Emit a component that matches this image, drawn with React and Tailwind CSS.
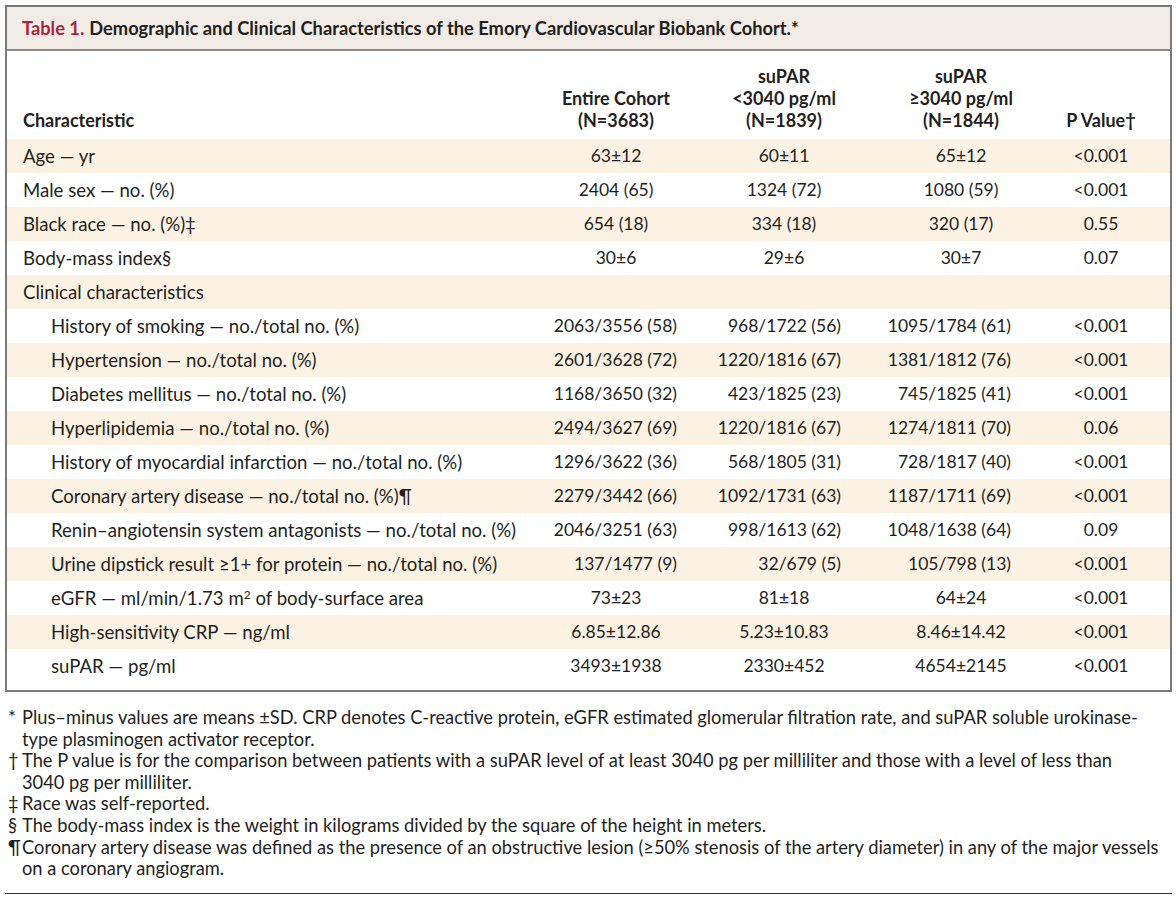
import React from "react";

const rows = [
  { label: "Age — yr", v: ["63±12", "60±11", "65±12", "<0.001"] },
  { label: "Male sex — no. (%)", v: ["2404 (65)", "1324 (72)", "1080 (59)", "<0.001"] },
  { label: "Black race — no. (%)‡", v: ["654 (18)", "334 (18)", "320 (17)", "0.55"] },
  { label: "Body-mass index§", v: ["30±6", "29±6", "30±7", "0.07"] },
  { label: "Clinical characteristics", v: ["", "", "", ""] },
  { label: "History of smoking — no./total no. (%)", sub: true, slash: true, v: ["2063/3556 (58)", "968/1722 (56)", "1095/1784 (61)", "<0.001"] },
  { label: "Hypertension — no./total no. (%)", sub: true, slash: true, v: ["2601/3628 (72)", "1220/1816 (67)", "1381/1812 (76)", "<0.001"] },
  { label: "Diabetes mellitus — no./total no. (%)", sub: true, slash: true, v: ["1168/3650 (32)", "423/1825 (23)", "745/1825 (41)", "<0.001"] },
  { label: "Hyperlipidemia — no./total no. (%)", sub: true, slash: true, v: ["2494/3627 (69)", "1220/1816 (67)", "1274/1811 (70)", "0.06"] },
  { label: "History of myocardial infarction — no./total no. (%)", sub: true, slash: true, v: ["1296/3622 (36)", "568/1805 (31)", "728/1817 (40)", "<0.001"] },
  { label: "Coronary artery disease — no./total no. (%)¶", sub: true, slash: true, v: ["2279/3442 (66)", "1092/1731 (63)", "1187/1711 (69)", "<0.001"] },
  { label: "Renin–angiotensin system antagonists — no./total no. (%)", sub: true, slash: true, v: ["2046/3251 (63)", "998/1613 (62)", "1048/1638 (64)", "0.09"] },
  { label: "Urine dipstick result ≥1+ for protein — no./total no. (%)", sub: true, slash: true, v: ["137/1477 (9)", "32/679 (5)", "105/798 (13)", "<0.001"] },
  { label: "egfr", sub: true, v: ["73±23", "81±18", "64±24", "<0.001"] },
  { label: "High-sensitivity CRP — ng/ml", sub: true, v: ["6.85±12.86", "5.23±10.83", "8.46±14.42", "<0.001"] },
  { label: "suPAR — pg/ml", sub: true, v: ["3493±1938", "2330±452", "4654±2145", "<0.001"] },
];

const slashPad = ["pr-[14px]", "pr-[36px]", "pr-[34px]"];

const Row = ({ row, idx }) => {
  const bg = idx % 2 === 0 ? "bg-[#fcf2e3]" : "bg-white";
  return (
    <div className={`grid grid-cols-[534px_150px_186px_168px_112px_1fr] h-[34px] items-center text-[17.5px] ${bg}`}>
      <div className={`text-[18.6px] ${row.sub ? "pl-[44px]" : "pl-[16px]"}`}>
        {row.label === "egfr" ? (
          <span>
            eGFR — ml/min/1.73 m<sup className="text-[12px]">2</sup> of body-surface area
          </span>
        ) : (
          row.label
        )}
      </div>
      {row.v.map((val, i) => (
        <div
          key={i}
          className={row.slash && i < 3 ? `text-right ${slashPad[i]}` : "text-center"}
        >
          {val}
        </div>
      ))}
      <div />
    </div>
  );
};

const App = () => {
  return (
    <div className="bg-white w-[1176px] h-[900px] pt-[5px] pl-[5px] font-['Lato',sans-serif] text-[#231f20] text-[17px] leading-[22px]">
      <div className="w-[1167px] border-2 border-[#7a7a7a]">
        <div className="bg-[#f1ece6] h-[44px] flex items-center pl-[15px] border-b-2 border-[#8a8a8a] font-bold text-[18.3px]">
          <span className="text-[#a7263e]">Table 1.</span>
          <span className="ml-[5px]">
            Demographic and Clinical Characteristics of the Emory Cardiovascular Biobank Cohort.*
          </span>
        </div>
        <div className="grid grid-cols-[534px_150px_186px_168px_112px_1fr] h-[88px] items-end pb-[8px] font-bold text-[18px]">
          <div className="pl-[16px]">Characteristic</div>
          <div className="text-center">
            Entire Cohort
            <br />
            (N=3683)
          </div>
          <div className="text-center">
            suPAR
            <br />
            &lt;3040 pg/ml
            <br />
            (N=1839)
          </div>
          <div className="text-center">
            suPAR
            <br />
            ≥3040 pg/ml
            <br />
            (N=1844)
          </div>
          <div className="text-center">P Value†</div>
          <div />
        </div>
        {rows.map((row, idx) => (
          <Row row={row} idx={idx} key={idx} />
        ))}
        <div className="h-[7px]" />
      </div>
      <div className="mt-[15px] w-[1167px] text-[18.3px] leading-[21.6px]">
        <div className="flex">
          <span className="w-[17px] shrink-0 pl-[3px]">*</span>
          <span>
            Plus–minus values are means ±SD. CRP denotes C-reactive protein, eGFR estimated glomerular filtration rate, and suPAR soluble urokinase-
            <br />
            type plasminogen activator receptor.
          </span>
        </div>
        <div className="flex">
          <span className="w-[17px] shrink-0 pl-[3px]">†</span>
          <span>
            The P value is for the comparison between patients with a suPAR level of at least 3040 pg per milliliter and those with a level of less than
            <br />
            3040 pg per milliliter.
          </span>
        </div>
        <div className="flex">
          <span className="w-[17px] shrink-0 pl-[3px]">‡</span>
          <span>Race was self-reported.</span>
        </div>
        <div className="flex">
          <span className="w-[17px] shrink-0 pl-[3px]">§</span>
          <span>The body-mass index is the weight in kilograms divided by the square of the height in meters.</span>
        </div>
        <div className="flex">
          <span className="w-[17px] shrink-0 pl-[3px]">¶</span>
          <span>
            Coronary artery disease was defined as the presence of an obstructive lesion (≥50% stenosis of the artery diameter) in any of the major vessels
            <br />
            on a coronary angiogram.
          </span>
        </div>
        <div className="mt-[13px] border-b border-[#333]" />
      </div>
    </div>
  );
};

export default App;
